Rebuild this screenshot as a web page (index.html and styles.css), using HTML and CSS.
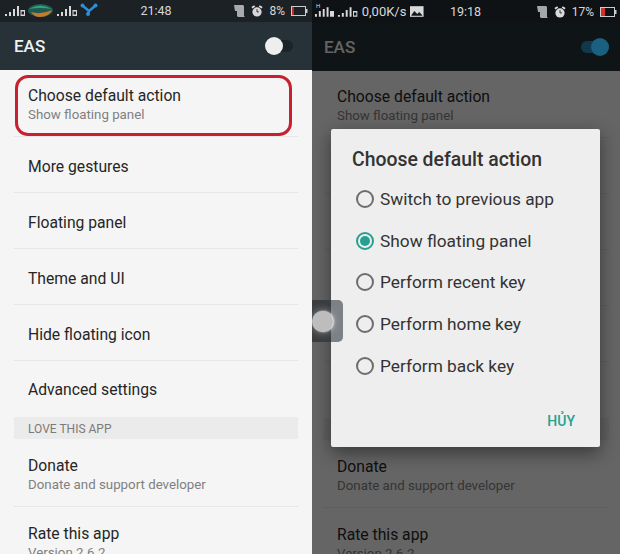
FILE: index.html
```html
<!DOCTYPE html>
<html lang="en">
<head>
  <meta charset="UTF-8">
  <title>EAS</title>
  <link rel="stylesheet" href="styles.css">
</head>
<body>
  <main class="screens">

    <section class="phone">
      <header class="status">
        <div class="status-left">
          <svg class="signal" viewBox="0 0 21 11"><path d="M1 9h2v2H1zM5 7h2v4H5zM9 4h2v7H9zM13 1h2v10h-2zM16.500 5h4.500v6h-4.500zM17.500 6.500v3h2.500v-3z" fill-rule="evenodd"/></svg>
          <svg class="carrier" viewBox="0 0 25 13"><ellipse cx="12.500" cy="6.500" rx="12.500" ry="6.500" fill="#1e5a52"/><path d="M1 5q11-7 23 0q-11-2-23 0z" fill="#35a07a"/><path d="M3 8q10 3 21-2q-3 7-12 7q-6 0-9-5z" fill="#c87a2c"/></svg>
          <svg class="signal" viewBox="0 0 21 11"><path d="M1 9h2v2H1zM5 7h2v4H5zM9 4h2v7H9zM13 1h2v10h-2zM16.500 5h4.500v6h-4.500zM17.500 6.500v3h2.500v-3z" fill-rule="evenodd"/></svg>
          <svg class="share" viewBox="0 0 18 13"><path d="M3 3l6 5 6-5M9 8l-1 3" stroke="#2e8fd0" stroke-width="2.500" fill="none"/><circle cx="2.500" cy="2.500" r="2" fill="#2e8fd0"/><circle cx="15.500" cy="2.500" r="2" fill="#2e8fd0"/><circle cx="8" cy="11" r="2" fill="#2e8fd0"/></svg>
        </div>
        <span class="clock">21:48</span>
        <div class="status-right">
          <svg class="sim" viewBox="0 0 11 12"><path d="M0 0h9l1 1v10l1 1H4l-1-1V6H1z"/></svg>
          <svg class="alarm" viewBox="0 0 13 13"><circle cx="6.500" cy="7.500" r="5"/><path d="M1 3l3-2M12 3L9 1" stroke="#ddd" stroke-width="2"/><path d="M6.500 4.500v3h2" stroke="#20262b" fill="none"/></svg>
          <span class="pct">8%</span>
          <svg class="battery" viewBox="0 0 17 10"><rect x=".5" y=".5" width="14" height="9" fill="none" stroke="#ccc"/><rect x="1" y="1" width="2" height="8" fill="#c62828"/><rect x="15" y="3" width="1.500" height="4" fill="#ccc"/></svg>
        </div>
      </header>

      <div class="appbar">
        <h1 class="appbar-title">EAS</h1>
        <span class="switch"><span class="switch-knob"></span></span>
      </div>

      <ul class="settings">
        <li class="row row-first">
          <span class="row-title">Choose default action</span>
          <span class="row-sub">Show floating panel</span>
          <span class="highlight"></span>
        </li>
        <li class="row"><span class="row-title">More gestures</span></li>
        <li class="row"><span class="row-title">Floating panel</span></li>
        <li class="row"><span class="row-title">Theme and UI</span></li>
        <li class="row"><span class="row-title">Hide floating icon</span></li>
        <li class="row row-advanced"><span class="row-title">Advanced settings</span></li>
        <li class="section-head">LOVE THIS APP</li>
        <li class="row row-double">
          <span class="row-title">Donate</span>
          <span class="row-sub">Donate and support developer</span>
        </li>
        <li class="row row-double row-last">
          <span class="row-title">Rate this app</span>
          <span class="row-sub">Version 2.6.2</span>
        </li>
      </ul>
    </section>

    <section class="phone phone-dim">
      <header class="status status-dark">
        <div class="status-left">
          <span class="net-h">H</span>
          <svg class="signal" viewBox="0 0 21 11"><path d="M1 8h2v3H1zM5 5h2v6H5zM9 3h2v8H9zM13 1h2v10h-2zM16.500 5h4.500v6h-4.500z"/></svg>
          <svg class="signal" viewBox="0 0 21 11"><path d="M1 9h2v2H1zM5 7h2v4H5zM9 4h2v7H9zM13 1h2v10h-2zM16.500 5h4.500v6h-4.500zM17.500 6.500v3h2.500v-3z" fill-rule="evenodd"/></svg>
          <span class="speed">0,00K/s</span>
          <svg class="photo" viewBox="0 0 14 11"><path d="M0 0h14v11H0z"/><path d="M1.500 9l3-4 3 3 2-2 3 3v1h-11z" fill="#15181b"/></svg>
        </div>
        <span class="clock">19:18</span>
        <div class="status-right">
          <svg class="sim" viewBox="0 0 11 12"><path d="M0 0h9l1 1v10l1 1H4l-1-1V6H1z"/></svg>
          <svg class="alarm" viewBox="0 0 13 13"><circle cx="6.500" cy="7.500" r="5"/><path d="M1 3l3-2M12 3L9 1" stroke="#ddd" stroke-width="2"/><path d="M6.500 4.500v3h2" stroke="#20262b" fill="none"/></svg>
          <span class="pct">17%</span>
          <svg class="battery" viewBox="0 0 17 10"><rect x=".5" y=".5" width="14" height="9" fill="none" stroke="#ccc"/><rect x="1" y="1" width="4" height="8" fill="#d32f2f"/><rect x="15" y="3" width="1.500" height="4" fill="#ccc"/></svg>
        </div>
      </header>

      <div class="appbar">
        <h1 class="appbar-title">EAS</h1>
        <span class="switch switch-on"><span class="switch-knob"></span></span>
      </div>

      <ul class="settings">
        <li class="row row-first">
          <span class="row-title">Choose default action</span>
          <span class="row-sub">Show floating panel</span>
        </li>
        <li class="row"></li>
        <li class="row"></li>
        <li class="row"></li>
        <li class="row"></li>
        <li class="row row-advanced"></li>
        <li class="section-head"></li>
        <li class="row row-double">
          <span class="row-title">Donate</span>
          <span class="row-sub">Donate and support developer</span>
        </li>
        <li class="row row-double row-last">
          <span class="row-title">Rate this app</span>
          <span class="row-sub">Version 2.6.2</span>
        </li>
      </ul>

      <div class="scrim"></div>

      <div class="dialog">
        <h2 class="dialog-title">Choose default action</h2>
        <div class="option"><span class="radio"></span>Switch to previous app</div>
        <div class="option"><span class="radio radio-on"></span>Show floating panel</div>
        <div class="option"><span class="radio"></span>Perform recent key</div>
        <div class="option"><span class="radio"></span>Perform home key</div>
        <div class="option"><span class="radio"></span>Perform back key</div>
        <div class="dialog-actions"><span class="cancel">HỦY</span></div>
      </div>

      <div class="float-handle"><span class="float-dot"></span></div>
    </section>

  </main>
</body>
</html>
```

FILE: styles.css
```css
* {
  box-sizing: border-box;
}

body {
  margin: 0;
  background: #f5f5f5;
  font-family: Roboto, "Liberation Sans", sans-serif;
}

.screens {
  display: flex;
  width: 620px;
  height: 554px;
  overflow: hidden;
}

.phone {
  position: relative;
  flex: 0 0 312px;
  height: 554px;
  overflow: hidden;
  background: #f5f5f5;
}

.phone-dim {
  flex-basis: 308px;
}

.status {
  display: flex;
  align-items: center;
  justify-content: space-between;
  height: 22px;
  padding: 0 4px 1px 4px;
  background: #1c2126;
  color: #d8d8d8;
  font-size: 12px;
}

.status-dark {
  position: relative;
  z-index: 2;
  height: 23px;
  padding: 0 3px 0 2px;
  background: #0f1215;
}

.status svg {
  display: block;
  fill: #d8d8d8;
}

.status-left,
.status-right {
  display: flex;
  align-items: center;
  gap: 3px;
  width: 110px;
}

.status-right {
  justify-content: flex-end;
  gap: 6px;
}

.signal {
  width: 21px;
  height: 11px;
}

.carrier {
  width: 25px;
  height: 13px;
}

.share {
  width: 18px;
  height: 13px;
  margin-top: -3px;
}

.sim {
  width: 11px;
  height: 12px;
  opacity: .75;
}

.alarm {
  width: 12px;
  height: 12px;
}

.battery {
  width: 17px;
  height: 10px;
}

.photo {
  width: 14px;
  height: 11px;
  margin-left: 1px;
}

.net-h {
  position: absolute;
  top: 2px;
  left: 4px;
  font-size: 6px;
  line-height: 7px;
}

.clock {
  font-size: 12.500px;
}

.pct {
  font-size: 12px;
}

.speed {
  margin-left: 1px;
  font-size: 13px;
}

.appbar {
  display: flex;
  align-items: center;
  justify-content: space-between;
  height: 48px;
  padding: 0 19px 0 14px;
  background: #263238;
  color: #f1f1f1;
}

.phone-dim .appbar {
  padding: 0 11px 0 12px;
}

.appbar-title {
  margin: 0;
  font-size: 17px;
  font-weight: 500;
}

.switch {
  position: relative;
  display: block;
  width: 28px;
  height: 12px;
  border-radius: 6px;
  background: #1c242a;
}

.switch-knob {
  position: absolute;
  top: -3px;
  left: 0;
  width: 18px;
  height: 18px;
  border-radius: 50%;
  background: #eeeeee;
}

.switch-on {
  z-index: 1;
  background: #103a4c;
}

.switch-on .switch-knob {
  left: auto;
  right: 0;
  background: #1a6080;
}

.settings {
  margin: 0;
  padding: 0 14px;
  list-style: none;
}

.row {
  position: relative;
  display: flex;
  flex-direction: column;
  justify-content: center;
  height: 56px;
  padding: 4px 14px 0;
  border-bottom: 1px solid #e6e6e6;
}

.row-first {
  height: 67px;
}

.row-double {
  height: 68px;
}

.row-advanced {
  padding-top: 2px;
  border-bottom: 0;
}

.row-last {
  border-bottom: 0;
}

.row-title {
  color: #262626;
  font-size: 15.700px;
  line-height: 20px;
}

.row-sub {
  color: #808080;
  font-size: 13.300px;
  line-height: 18px;
}

.section-head {
  display: flex;
  align-items: center;
  height: 22px;
  padding: 1px 14px 0;
  background: #ebebeb;
  color: #7a7a7a;
  font-size: 12px;
}

.highlight {
  position: absolute;
  top: 5px;
  left: 1px;
  width: 277px;
  height: 61px;
  border: 3px solid #c9202f;
  border-radius: 13px;
}

.scrim {
  position: absolute;
  inset: 0;
  background: rgba(0, 0, 0, .59);
}

.phone-dim .settings {
  padding: 0 11px;
}

.dialog {
  position: absolute;
  top: 129px;
  left: 19px;
  width: 269px;
  height: 318px;
  padding: 20px 21px 0;
  border-radius: 2px;
  background: #eeeeee;
  box-shadow: 0 6px 18px rgba(0, 0, 0, .45);
  color: #333333;
}

.dialog-title {
  margin: 0 0 7.500px;
  font-size: 19.400px;
  font-weight: 500;
  line-height: 22px;
}

.option {
  display: flex;
  align-items: center;
  gap: 6px;
  height: 41.600px;
  margin-left: 4px;
  font-size: 17.300px;
}

.radio {
  position: relative;
  flex: none;
  width: 18px;
  height: 18px;
  border: 2px solid #6d6d6d;
  border-radius: 50%;
}

.radio-on {
  border-color: #26a08f;
}

.radio-on::after {
  content: "";
  position: absolute;
  inset: 2px;
  border-radius: 50%;
  background: #26a08f;
}

.dialog-actions {
  display: flex;
  justify-content: flex-end;
  margin: 27px 4px 0 0;
}

.cancel {
  color: #26a08f;
  font-size: 14px;
  font-weight: 500;
}

.float-handle {
  position: absolute;
  top: 300px;
  left: 0;
  display: flex;
  align-items: center;
  width: 31px;
  height: 42px;
  border-radius: 0 5px 5px 0;
  background: linear-gradient(to right, #3a3d40 0, #3a3d40 19px, #7c8187 19px);
}

.float-dot {
  width: 21px;
  height: 21px;
  border-radius: 50%;
  background: #bdbdbd;
  box-shadow: 1px 0 2px #f2f2f2, 0 0 6px 3px rgba(255, 255, 255, .2);
}
```
